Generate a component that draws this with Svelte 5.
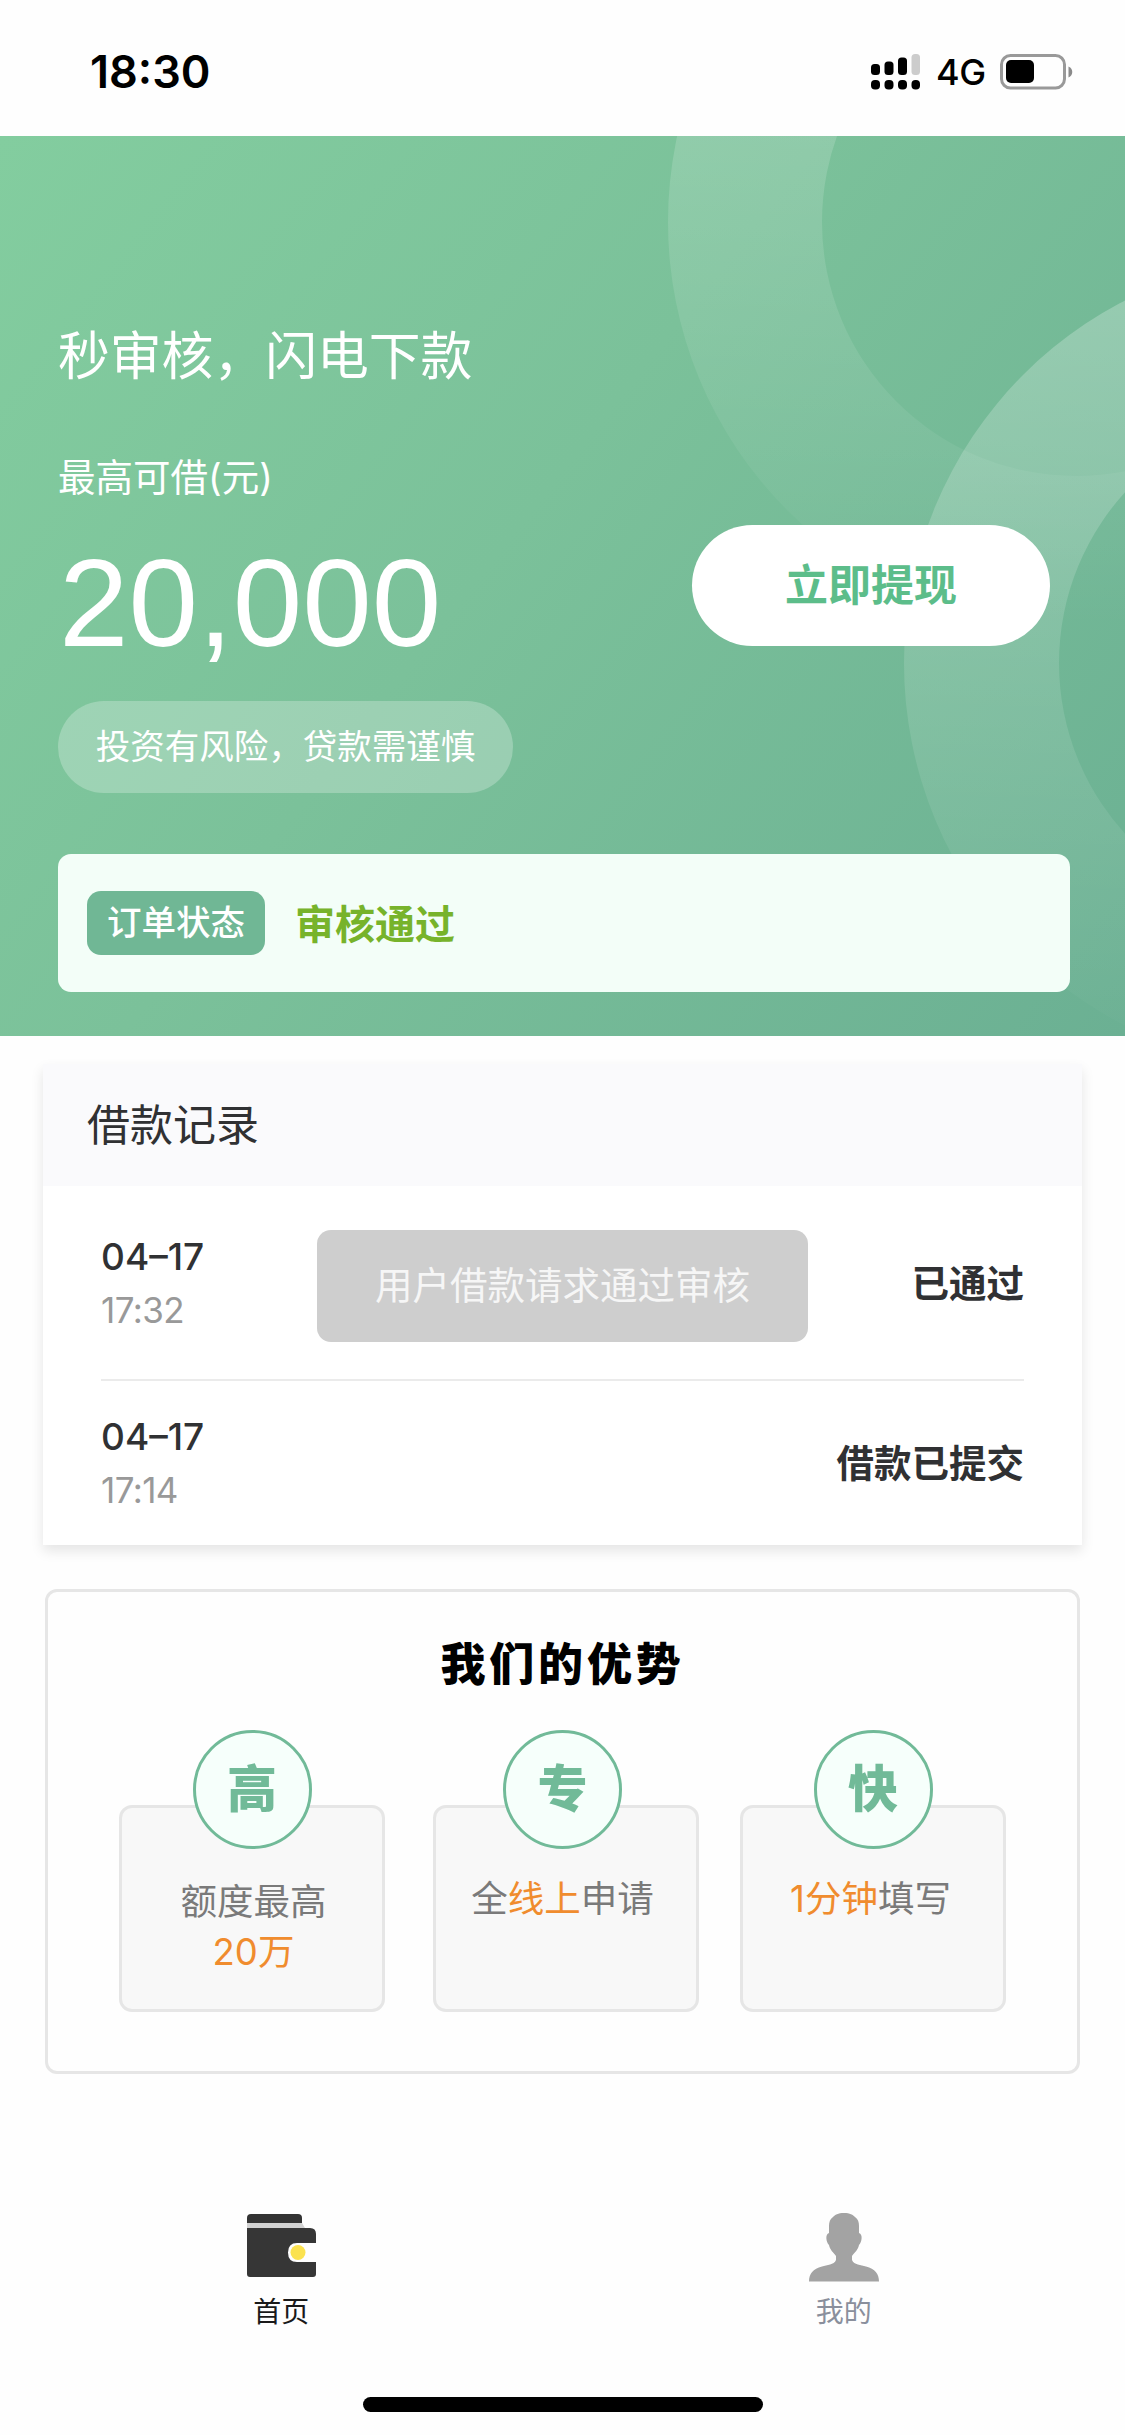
<script lang="ts">
  type Part = { text: string; hot?: boolean };

  const records = [
    { date: "04–17", time: "17:32", status: "已通过" },
    { date: "04–17", time: "17:14", status: "借款已提交" },
  ];

  const advantages: { mark: string; lines: Part[][] }[] = [
    { mark: "高", lines: [[{ text: "额度最高" }], [{ text: "20万", hot: true }]] },
    { mark: "专", lines: [[{ text: "全" }, { text: "线上", hot: true }, { text: "申请" }]] },
    { mark: "快", lines: [[{ text: "1分钟", hot: true }, { text: "填写" }]] },
  ];

  let toast = "用户借款请求通过审核";
</script>

<div class="screen">
  <header class="status-bar">
    <span class="clock">18:30</span>
    <div class="indicators">
      <svg class="signal" width="49" height="36" viewBox="0 0 49 36">
        <rect x="0" y="10" width="9" height="11" rx="3.5" />
        <rect x="13.5" y="7.5" width="9" height="13.5" rx="3.5" />
        <rect x="27" y="3.5" width="9" height="17.5" rx="3.5" />
        <rect x="40.5" y="0" width="8.5" height="21" rx="3.5" fill="#ccc" />
        <rect x="0" y="26" width="9" height="9.5" rx="4" />
        <rect x="13.5" y="26" width="9" height="9.5" rx="4" />
        <rect x="27" y="26" width="9" height="9.5" rx="4" />
        <rect x="40.5" y="26" width="8.5" height="9.5" rx="4" />
      </svg>
      <span class="network">4G</span>
      <svg class="battery" width="73" height="36" viewBox="0 0 73 36">
        <rect x="1.5" y="1.5" width="63" height="32.5" rx="9" fill="none" stroke="#999" stroke-width="3" />
        <rect x="6" y="6" width="28" height="23" rx="5" />
        <path d="M68.500 12.500c5 2 5 9 0 11z" fill="#8a8a8a" />
      </svg>
    </div>
  </header>

  <section class="hero">
    <svg class="rings" width="1125" height="900" viewBox="0 0 1125 900">
      <defs>
        <linearGradient id="ring" x1="0" y1="0" x2="0" y2="1">
          <stop offset="0" stop-color="#fff" stop-opacity="0.26" />
          <stop offset="1" stop-color="#fff" stop-opacity="0" />
        </linearGradient>
      </defs>
      <path
        fill="url(#ring)"
        fill-rule="evenodd"
        d="M668 86a408 408 0 1 0 816 0a408 408 0 1 0 -816 0zM822 86a254 254 0 1 0 508 0a254 254 0 1 0 -508 0z"
      />
      <path
        fill="url(#ring)"
        fill-rule="evenodd"
        d="M904 527a408 408 0 1 0 816 0a408 408 0 1 0 -816 0zM1059 527a254 254 0 1 0 508 0a254 254 0 1 0 -508 0z"
      />
    </svg>

    <div class="hero-body">
      <h1>秒审核，闪电下款</h1>
      <div class="offer">
        <div>
          <p class="label">最高可借(元)</p>
          <p class="amount">20,000</p>
        </div>
        <button class="withdraw">立即提现</button>
      </div>
      <p class="notice">投资有风险，贷款需谨慎</p>
      <div class="order">
        <span class="tag">订单状态</span>
        <span class="state">审核通过</span>
      </div>
    </div>
  </section>

  <section class="records">
    <h2>借款记录</h2>
    <ul>
      {#each records as record}
        <li>
          <div class="when">
            <p class="date">{record.date}</p>
            <p class="time">{record.time}</p>
          </div>
          <span class="result">{record.status}</span>
        </li>
      {/each}
    </ul>
    {#if toast}
      <div class="toast">{toast}</div>
    {/if}
  </section>

  <section class="advantages">
    <h3>我们的优势</h3>
    <div class="cards">
      {#each advantages as item}
        <div class="card">
          <span class="mark">{item.mark}</span>
          <div class="lines">
            {#each item.lines as line}
              <p>{#each line as part}<span class:hot={part.hot}>{part.text}</span>{/each}</p>
            {/each}
          </div>
        </div>
      {/each}
    </div>
  </section>

  <nav>
    <a href="#home" class="active">
      <svg width="70" height="70" viewBox="0 0 70 70">
        <path d="M1 10V5q0-4 4-4h47q4 0 4 4v5z" fill="#333" />
        <path d="M1 10h55l3 5H1z" fill="#d2d2d2" />
        <path d="M1 15h63q6 0 6 6v9H51q-9 0-9 9.500t9 9.500h19v12q0 3-3 3H4q-3 0-3-3z" fill="#363636" />
        <circle cx="52" cy="39.500" r="7.500" fill="#fbe24f" />
      </svg>
      首页
    </a>
    <a href="#mine">
      <svg width="70" height="70" viewBox="0 0 70 70">
        <path
          fill="#a3a3a3"
          d="M35 0c6 0 9 2 11 4c3 2 4 5 4 9v7c4 1 3 9 0 12c-1 5-4 7-7 11v4c2 5 9 5 14 6.500c9 2.500 13 7 13 15h-70c0-8 4-12.500 13-15c5-1.500 12-1.500 14-6.500v-4c-3-4-6-6-7-11c-3-3-4-11 0-12v-7c0-4 1-7 4-9c2-2 5-4 11-4z"
        />
      </svg>
      我的
    </a>
  </nav>
  <div class="home-bar"></div>
</div>

<style>
  :global(body) {
    margin: 0;
    background: #fefefe;
  }

  .screen {
    width: 1125px;
    height: 2435px;
    display: flex;
    flex-direction: column;
    box-sizing: border-box;
    overflow: hidden;
    font-family: Inter, "Noto Sans CJK SC", sans-serif;
    color: #303133;
  }

  h1,
  h2,
  h3,
  p,
  ul {
    margin: 0;
    padding: 0;
    font-weight: 400;
    list-style: none;
  }

  .status-bar {
    height: 136px;
    box-sizing: border-box;
    padding: 7px 52px 0 90px;
    display: flex;
    align-items: center;
    justify-content: space-between;
    flex-shrink: 0;
    color: #000;
  }

  .clock {
    font-size: 45px;
    font-weight: 600;
  }

  .indicators {
    display: flex;
    align-items: center;
  }

  .network {
    width: 49px;
    margin: 0 15px 0 16px;
    font-size: 36px;
    font-weight: 450;
    letter-spacing: -0.5px;
    line-height: 36px;
  }

  .hero {
    position: relative;
    height: 900px;
    flex-shrink: 0;
    background: linear-gradient(128deg, #83cd9f 0%, #7bc19a 45%, #6bb093 100%);
  }

  .rings {
    position: absolute;
    inset: 0;
  }

  .hero-body {
    position: relative;
    padding: 190px 55px 0 58px;
    color: #fff;
  }

  h1 {
    font-size: 51.8px;
    line-height: 60px;
  }

  .offer {
    display: flex;
    justify-content: space-between;
    align-items: flex-end;
    margin-top: 65px;
    padding-right: 20px;
  }

  .label {
    font-size: 37.5px;
    line-height: 54px;
  }

  .amount {
    margin-top: 31px;
    padding-left: 1px;
    font-family: "Liberation Sans", sans-serif;
    font-size: 125px;
    line-height: 134px;
  }

  .withdraw {
    width: 358px;
    height: 121px;
    margin-bottom: 24px;
    padding-bottom: 8px;
    border: none;
    border-radius: 61px;
    background: #fff;
    color: #5cbd8a;
    font: 700 43px "Noto Sans CJK SC", sans-serif;
  }

  .notice {
    width: 455px;
    height: 92px;
    margin-top: 31px;
    border-radius: 46px;
    background: rgba(255, 255, 255, 0.25);
    font-size: 34.5px;
    line-height: 91px;
    text-align: center;
  }

  .order {
    display: flex;
    align-items: center;
    gap: 30px;
    height: 138px;
    margin-top: 61px;
    padding-left: 29px;
    border-radius: 13px;
    background: #f3fef8;
  }

  .tag {
    width: 178px;
    height: 64px;
    border-radius: 14px;
    background: #70b795;
    font-size: 34.5px;
    font-weight: 500;
    line-height: 64px;
    text-align: center;
  }

  .state {
    padding-bottom: 3px;
    color: #77b32b;
    font-size: 40px;
    font-weight: 700;
  }

  .records {
    position: relative;
    height: 481px;
    margin: 28px 43px 0;
    flex-shrink: 0;
    background: #fff;
    box-shadow: 0 6px 12px rgba(0, 0, 0, 0.1);
  }

  h2 {
    height: 122px;
    padding-left: 44px;
    background: #fafafc;
    font-size: 43px;
    line-height: 122px;
  }

  ul {
    padding: 0 58px;
  }

  li {
    display: flex;
    justify-content: space-between;
    align-items: center;
    height: 189px;
    padding-bottom: 4px;
    border-bottom: 2px solid #ebebeb;
  }

  li:last-child {
    height: 158px;
    border-bottom: none;
  }

  .when {
    padding-top: 7px;
  }

  .date {
    font-size: 37px;
    font-weight: 550;
    line-height: 52px;
  }

  .time {
    color: #999;
    font-size: 35px;
    letter-spacing: -0.6px;
    line-height: 54px;
  }

  .result {
    font-size: 37.5px;
    font-weight: 700;
  }

  .toast {
    position: absolute;
    top: 166px;
    left: 274px;
    width: 491px;
    height: 112px;
    border-radius: 14px;
    background: #cecece;
    color: #f6f6f6;
    font-size: 37.5px;
    line-height: 111px;
    text-align: center;
  }

  .advantages {
    height: 485px;
    margin: 44px 45px 0;
    box-sizing: border-box;
    border: 3px solid #e6e6e6;
    border-radius: 12px;
    flex-shrink: 0;
  }

  h3 {
    padding-top: 41px;
    color: #000;
    font-size: 45px;
    font-weight: 900;
    line-height: 64px;
    letter-spacing: 3.8px;
    text-align: center;
  }

  .cards {
    display: flex;
    gap: 41px;
    padding: 33px 0 0 71px;
  }

  .card {
    display: flex;
    flex-direction: column;
    align-items: center;
    width: 266px;
    height: 207px;
    margin-top: 75px;
    box-sizing: border-box;
    border: 3px solid #e6e6e6;
    border-radius: 13px;
    background: #f8f8f8;
    color: #7a7a7a;
    font-size: 36.5px;
  }

  .card:nth-child(2) {
    margin-left: 7px;
    padding-right: 7px;
  }

  .mark {
    width: 113px;
    height: 113px;
    margin-top: -78px;
    border: 3px solid #71ba98;
    border-radius: 50%;
    background: #f6fffb;
    color: #71ba98;
    font-size: 50px;
    font-weight: 900;
    line-height: 113px;
    text-align: center;
  }

  .lines {
    padding-top: 25px;
    line-height: 50px;
    text-align: center;
  }

  .card:first-child .lines {
    padding: 28px 0 0 3px;
  }

  .card:last-child .lines {
    padding-right: 5px;
  }

  .hot {
    color: #f08c2e;
  }

  nav {
    display: flex;
    margin-top: 139px;
  }

  a {
    display: flex;
    flex: 1;
    flex-direction: column;
    align-items: center;
    gap: 9px;
    color: #8a8f9c;
    font-size: 28px;
    line-height: 40px;
    text-decoration: none;
  }

  .active {
    color: #1a1a1a;
  }

  .home-bar {
    width: 400px;
    height: 15px;
    margin: 65px auto 0;
    border-radius: 8px;
    background: #000;
  }
</style>
